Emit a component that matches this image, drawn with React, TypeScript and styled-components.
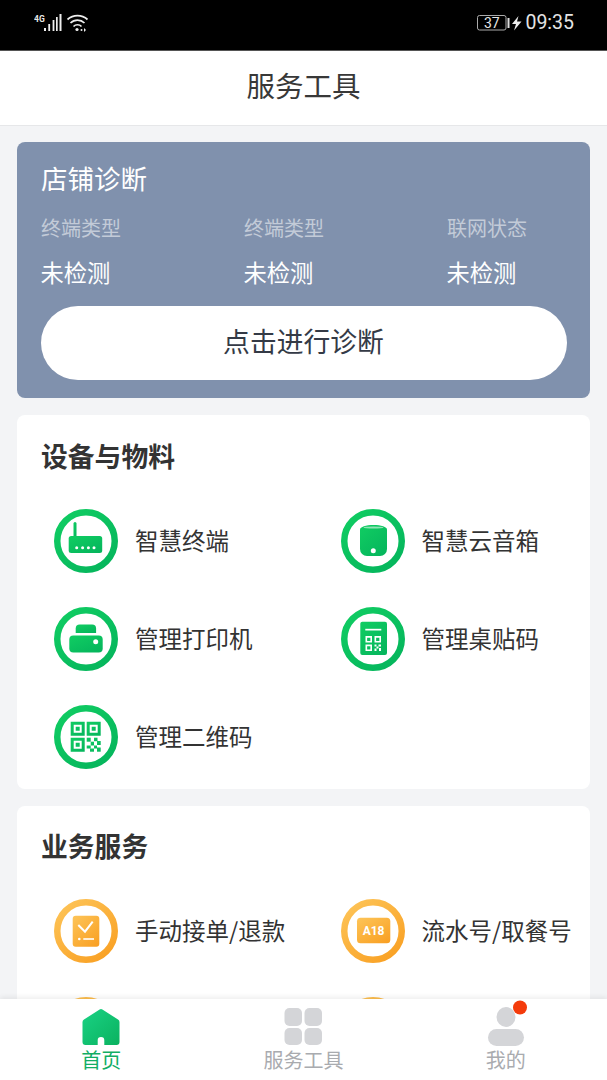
import React from 'react';
import styled, { createGlobalStyle } from 'styled-components';

const Global = createGlobalStyle`
  html, body { margin: 0; padding: 0; background: #f3f4f6; overflow: hidden; }
  * { box-sizing: border-box; }
  body { font-family: "Noto Sans CJK SC", "Noto Sans", sans-serif; }
`;

const Page = styled.div`
  width: 607px; height: 1080px; display: flex; flex-direction: column; overflow: hidden; background: #f3f4f6;
`;
const StatusBar = styled.div`
  height: 51px; flex: none; background: #000; border-bottom: 1px solid #555; color: #dcdcdc;
  display: flex; justify-content: space-between; align-items: flex-start; padding: 12px 33px 0 34px;
`;
const StatusGroup = styled.div`
  display: flex; align-items: center; height: 22px;
`;
const Clock = styled.span`
  font: 400 19.5px/24px Roboto, sans-serif; margin-left: 2px; color: #e4e4e4;
`;
const Header = styled.header`
  height: 75px; flex: none; background: #fff; border-bottom: 1px solid #e6e7e9;
  display: flex; align-items: center; justify-content: center;
  font-size: 28.5px; color: #383838; font-weight: 400; padding-bottom: 8px;
`;
const Scroll = styled.main`
  flex: 1; min-height: 0; overflow: hidden; padding: 16px 17px 0; display: flex; flex-direction: column; gap: 17px;
`;
const DiagCard = styled.section`
  height: 256px; flex: none; background: #8091ad; border-radius: 8px; padding: 18px 24px 0; color: #fff;
`;
const DiagTitle = styled.h2`
  margin: 0; font-size: 26.5px; line-height: 36px; font-weight: 400;
`;
const DiagGrid = styled.div`
  display: grid; grid-template-columns: repeat(3, 203px); margin-top: 18px;
`;
const DiagLabel = styled.div`
  font-size: 20px; line-height: 28px; color: #c3cbd8;
`;
const DiagValue = styled.div`
  font-size: 23.3px; line-height: 32px; color: #fff; margin-top: 14px; margin-left: -0.5px;
`;
const DiagButton = styled.button`
  display: block; width: 526px; height: 74px; margin-top: 18px; margin-left: -0.5px; padding: 0 0 5px; border: 0; border-radius: 37px; background: #fff;
  color: #343a46; font: 400 26.8px "Noto Sans CJK SC", sans-serif;
`;
const Card = styled.section<{ $top: number }>`
  flex: none; background: #fff; border-radius: 8px; padding: ${p => p.$top}px 0 0 24px;
`;
const CardTitle = styled.h2`
  margin: 0; font-size: 26.8px; line-height: 40px; font-weight: 700; color: #333;
`;
const ToolGrid = styled.div`
  display: grid; grid-template-columns: 286.5px 1fr; grid-auto-rows: 64px; row-gap: 34px; margin: 33px 0 0 13px; padding-bottom: 20px;
`;
const Tool = styled.div`
  display: flex; align-items: center; gap: 17px; height: 64px;
`;
const ToolName = styled.span`
  font-size: 23.5px; color: #333; white-space: nowrap; margin-top: -2px;
`;
const TabBar = styled.nav`
  height: 81px; flex: none; background: #fff; box-shadow: 0 -2px 5px rgba(0,0,0,.07); position: relative;
  display: grid; grid-template-columns: repeat(3, 1fr);
`;
const Tab = styled.div<{ $active?: boolean }>`
  display: flex; flex-direction: column; align-items: center; padding-top: 9px;
  color: ${p => (p.$active ? '#12ad63' : '#a9abaf')}; font-size: 20px; line-height: 28px;
`;
const TabIconSlot = styled.div`
  height: 37px; margin-bottom: 1px; display: flex; align-items: flex-start;
`;
const HomeSvg = styled.svg`
  margin-top: 0.5px;
`;
const UserSvg = styled.svg`
  margin-top: -8px;
`;
const RingSvg = styled.svg`
  flex: none;
`;

type Tone = 'g' | 'o';
const stops = { g: ['#10cc62', '#05b55c'], o: ['#fdc356', '#f9a023'] };

function Ring({ tone, children }: { tone: Tone; children?: React.ReactNode }) {
  const id = `grad-${tone}`;
  return (
    <RingSvg width="64" height="64" viewBox="0 0 64 64">
      <defs>
        <linearGradient id={id} x1="0.1" y1="0" x2="0.9" y2="1">
          <stop offset="0" stopColor={stops[tone][0]} />
          <stop offset="1" stopColor={stops[tone][1]} />
        </linearGradient>
      </defs>
      <circle cx="32" cy="32" r="28.75" fill="none" stroke={`url(#${id})`} strokeWidth="6.5" />
      <g fill={`url(#${id})`}>{children}</g>
    </RingSvg>
  );
}

const Router = () => (
  <Ring tone="g">
    <rect x="19.5" y="13" width="3" height="16" rx="1.5" />
    <rect x="14.7" y="27" width="33.5" height="17" rx="2.5" />
    <g fill="#fff"><circle cx="22.7" cy="38.7" r="1.5" /><circle cx="28.6" cy="38.7" r="1.5" /><circle cx="34.4" cy="38.7" r="1.5" /><circle cx="40" cy="38.7" r="1.5" /></g>
  </Ring>
);
const Printer = () => (
  <Ring tone="g">
    <path d="M21.7 26v-4.5a4 4 0 0 1 4-4h12.4a4 4 0 0 1 4 4V26z" />
    <rect x="15.3" y="28.6" width="33.4" height="16.8" rx="4" />
    <circle cx="41.7" cy="34.7" r="2.5" fill="#fff" />
  </Ring>
);
const Speaker = () => (
  <Ring tone="g">
    <path d="M19 20.5c0-2.6 6-4.5 13.5-4.5S46 17.9 46 20.5V40a7 7 0 0 1-7 7H26a7 7 0 0 1-7-7z" />
    <ellipse cx="32.5" cy="18.5" rx="10" ry="1.1" fill="#8fe3b4" />
    <circle cx="32.3" cy="41.7" r="2.5" fill="#fff" />
  </Ring>
);
const SmallQr = ({ x, y, s }: { x: number; y: number; s: number }) => (
  <path fill="#fff" fillRule="evenodd" d={`M${x} ${y}h${s}v${s}h-${s}z M${x + s * 0.25} ${y + s * 0.25}v${s * 0.5}h${s * 0.5}v-${s * 0.5}z`} />
);
const TableCode = () => (
  <Ring tone="g">
    <rect x="19.3" y="14.7" width="26.7" height="33.3" rx="2" />
    <rect x="24.3" y="21.8" width="16" height="1.7" fill="#fff" />
    <SmallQr x={24.5} y={29} s={6.5} />
    <SmallQr x={33.5} y={29} s={6.5} />
    <SmallQr x={24.5} y={37.5} s={6.5} />
    <g fill="#fff"><rect x="33.5" y="37.5" width="2" height="2" /><rect x="37.5" y="37.5" width="2.5" height="2" /><rect x="35.5" y="39.5" width="2" height="2" /><rect x="33.5" y="41.5" width="2" height="2.5" /><rect x="38" y="41" width="2" height="3" /></g>
  </Ring>
);
const QrBlock = ({ x, y }: { x: number; y: number }) => (
  <path fillRule="evenodd" d={`M${x} ${y}h14v14h-14z M${x + 3} ${y + 3}v8h8v-8z M${x + 5} ${y + 5}h4v4h-4z`} />
);
const Qr = () => (
  <Ring tone="g">
    <QrBlock x={16.7} y={16.7} />
    <QrBlock x={32.7} y={16.7} />
    <QrBlock x={16.7} y={32.7} />
    <rect x="32.7" y="32.7" width="4" height="4" />
    <rect x="40" y="32.7" width="3.5" height="3.5" />
    <rect x="43" y="36" width="3.7" height="4" />
    <rect x="36.7" y="36.7" width="3.3" height="3.8" />
    <rect x="32.7" y="40.5" width="4" height="3" />
    <rect x="40" y="40.5" width="3" height="3" />
    <rect x="36" y="43.5" width="4" height="3.2" />
    <rect x="43" y="42.5" width="3.7" height="4.2" />
  </Ring>
);
const Ticket = () => (
  <Ring tone="o">
    <rect x="18.7" y="16.7" width="26.6" height="31" rx="3" />
    <path d="M24.3 26l6.7 6.700 7.700-10" fill="none" stroke="#fff" strokeWidth="2" />
    <circle cx="25.3" cy="40" r="1.3" fill="#fff" />
    <rect x="29.3" y="39.2" width="10.7" height="1.6" fill="#fff" />
  </Ring>
);
const A18 = () => (
  <Ring tone="o">
    <rect x="16" y="18.7" width="33.3" height="25.6" rx="3.5" />
    <text x="32.6" y="36" textAnchor="middle" fill="#fff" fontFamily="Roboto, sans-serif" fontWeight="700" fontSize="12">A18</text>
  </Ring>
);

const SignalIcon = () => (
  <svg width="56" height="22" viewBox="0 0 56 22">
    <text x="0" y="10" fill="#e8e8e8" fontFamily="Roboto, sans-serif" fontWeight="700" fontSize="8.5">4G</text>
    <g fill="#eee">
      <rect x="10" y="16" width="2" height="3" /><rect x="14.3" y="12" width="1.8" height="7" />
      <rect x="18.6" y="8" width="1.8" height="11" /><rect x="22" y="5" width="1.7" height="14" /><rect x="25.5" y="2" width="2" height="17" />
    </g>
    <g fill="none" stroke="#eee" strokeWidth="1.7">
      <path d="M33.5 7.5a15 15 0 0 1 20 0" /><path d="M36.5 11a10 10 0 0 1 14 0" /><path d="M39.5 14.5a5.5 5.5 0 0 1 8 0" />
    </g>
    <circle cx="43" cy="17.5" r="1.6" fill="#eee" /><circle cx="47.5" cy="18" r="1" fill="#eee" /><path d="M50 16l2 2-2 2z" fill="#eee" />
  </svg>
);
const BatteryIcon = () => (
  <svg width="46" height="22" viewBox="0 0 46 22">
    <rect x="0.5" y="3.5" width="28.5" height="14.5" rx="2" fill="none" stroke="#aaa" />
    <text x="14.8" y="16" textAnchor="middle" fill="#e6e6e6" fontFamily="Roboto, sans-serif" fontSize="14">37</text>
    <rect x="30.5" y="6" width="2" height="10" fill="#ddd" />
    <path d="M41.5 4L35 12h4l-2 6.500L44.500 9.500h-4.500z" fill="#eee" />
  </svg>
);
const HomeIcon = () => (
  <HomeSvg width="38" height="36" viewBox="0 0 38 36">
    <defs><linearGradient id="home" x1="0" y1="0" x2="1" y2="1"><stop offset="0" stopColor="#1ad284" /><stop offset="1" stopColor="#0ab25f" /></linearGradient></defs>
    <path fill="url(#home)" d="M17.600.5a2.500 2.500 0 0 1 2.800 0l15.600 10a3 3 0 0 1 1.500 2.500V33a3 3 0 0 1-3 3H22.300v-4.700a3.300 3.300 0 0 0-6.600 0V36H3.500a3 3 0 0 1-3-3V13A3 3 0 0 1 2 10.500z" />
  </HomeSvg>
);
const GridIcon = () => (
  <svg width="39" height="37" viewBox="0 0 39 37" fill="#d4d5d8">
    <rect x="0.5" y="0" width="17.5" height="18" rx="5" /><rect x="20.5" y="0" width="17.5" height="18" rx="5" />
    <rect x="0.5" y="20" width="17.5" height="17" rx="5" /><rect x="20.5" y="20" width="17.5" height="17" rx="5" />
  </svg>
);
const UserIcon = () => (
  <UserSvg width="46" height="46" viewBox="0 0 46 46">
    <ellipse cx="23" cy="17" rx="9.5" ry="10" fill="#d4d5d8" />
    <rect x="5" y="29" width="36" height="17" rx="8.5" fill="#d4d5d8" />
    <circle cx="37" cy="7.5" r="7" fill="#f43b0b" />
  </UserSvg>
);

export default function App() {
  return (
    <Page>
      <Global />
      <StatusBar>
        <StatusGroup><SignalIcon /></StatusGroup>
        <StatusGroup><BatteryIcon /><Clock>09:35</Clock></StatusGroup>
      </StatusBar>
      <Header>服务工具</Header>
      <Scroll>
        <DiagCard>
          <DiagTitle>店铺诊断</DiagTitle>
          <DiagGrid>
            <div><DiagLabel>终端类型</DiagLabel><DiagValue>未检测</DiagValue></div>
            <div><DiagLabel>终端类型</DiagLabel><DiagValue>未检测</DiagValue></div>
            <div><DiagLabel>联网状态</DiagLabel><DiagValue>未检测</DiagValue></div>
          </DiagGrid>
          <DiagButton>点击进行诊断</DiagButton>
        </DiagCard>
        <Card $top={21}>
          <CardTitle>设备与物料</CardTitle>
          <ToolGrid>
            <Tool><Router /><ToolName>智慧终端</ToolName></Tool>
            <Tool><Speaker /><ToolName>智慧云音箱</ToolName></Tool>
            <Tool><Printer /><ToolName>管理打印机</ToolName></Tool>
            <Tool><TableCode /><ToolName>管理桌贴码</ToolName></Tool>
            <Tool><Qr /><ToolName>管理二维码</ToolName></Tool>
          </ToolGrid>
        </Card>
        <Card $top={20}>
          <CardTitle>业务服务</CardTitle>
          <ToolGrid>
            <Tool><Ticket /><ToolName>手动接单/退款</ToolName></Tool>
            <Tool><A18 /><ToolName>流水号/取餐号</ToolName></Tool>
            <Tool><Ring tone="o" /></Tool>
            <Tool><Ring tone="o" /></Tool>
          </ToolGrid>
        </Card>
      </Scroll>
      <TabBar>
        <Tab $active><TabIconSlot><HomeIcon /></TabIconSlot>首页</Tab>
        <Tab><TabIconSlot><GridIcon /></TabIconSlot>服务工具</Tab>
        <Tab><TabIconSlot><UserIcon /></TabIconSlot>我的</Tab>
      </TabBar>
    </Page>
  );
}
